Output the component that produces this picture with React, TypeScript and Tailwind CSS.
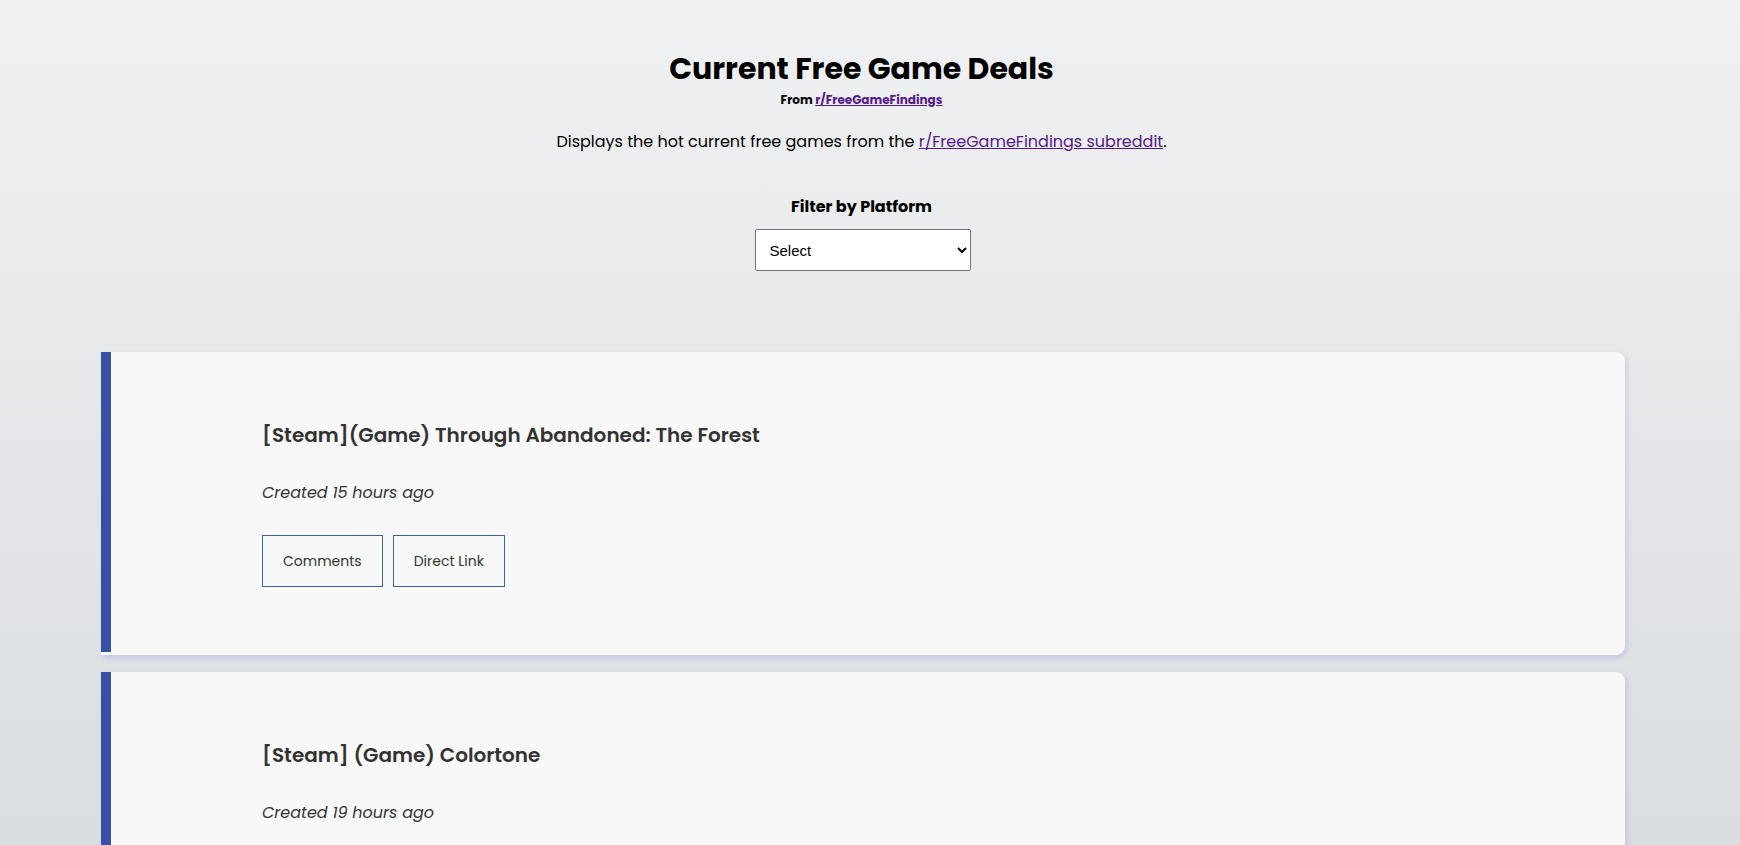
import React from "react";

type Deal = {
  id: string;
  title: string;
  created: string;
};

const deals: Deal[] = [
  { id: "a", title: "[Steam](Game) Through Abandoned: The Forest", created: "Created 15 hours ago" },
  { id: "b", title: "[Steam] (Game) Colortone", created: "Created 19 hours ago" },
];

const DealCard: React.FC<{ deal: Deal }> = ({ deal }) => {
  return (
    <div className="flex bg-[#f8f8f8] rounded-r-[9px] shadow-[2px_3px_5px_rgba(150,156,210,0.35)]">
      {/* 左の青いライン */}
      <div className="w-[10px] shrink-0 bg-[#3750a3] mb-[3px]" />
      <div className="flex flex-col pl-[151px] pt-[69px] pb-[68px] text-[#333]">
        <h2 className="text-[20px] leading-[28px] font-semibold">{deal.title}</h2>
        <p className="mt-[32px] text-[16px] leading-[24px] italic">{deal.created}</p>
        <div className="mt-[30px] flex gap-[10px]">
          <a href="#" className="h-[52px] px-[20px] flex items-center border border-[#3d6591] text-[14px]">
            Comments
          </a>
          <a href="#" className="h-[52px] px-[20px] flex items-center border border-[#3d6591] text-[14px]">
            Direct Link
          </a>
        </div>
      </div>
    </div>
  );
};

export default function App() {
  return (
    <div className="min-h-screen bg-fixed bg-gradient-to-b from-[#f0f1f2] to-[#dadde1] font-['Poppins','Inter',sans-serif] text-black">
      <div className="w-[1723px] pb-[40px]">
        {/* ヘッダー */}
        <header className="flex flex-col items-center pt-[51px] text-center">
          <h1 className="text-[30px] leading-[36px] font-bold">Current Free Game Deals</h1>
          <p className="mt-[5px] text-[12px] leading-[16px] font-bold">
            From{" "}
            <a href="#" className="text-[#551a8b] underline">
              r/FreeGameFindings
            </a>
          </p>
          <p className="mt-[22px] text-[16px] leading-[24px]">
            Displays the hot current free games from the{" "}
            <a href="#" className="text-[#551a8b] underline">
              r/FreeGameFindings subreddit
            </a>
            .
          </p>
          <label className="mt-[41px] text-[16px] leading-[24px] font-bold">Filter by Platform</label>
          <select className="mt-[10px] ml-[2px] w-[216px] h-[42px] pl-[10px] pr-[6px] bg-white border border-[#767676] rounded-[2px] text-[15px] font-['Liberation_Sans',Arial,sans-serif]">
            <option>Select</option>
            <option>Steam</option>
            <option>Epic Games</option>
            <option>GOG</option>
          </select>
        </header>

        {/* カード一覧 */}
        <div className="mt-[81px] ml-[101px] w-[1524px] flex flex-col gap-[17px]">
          {deals.map((d) => (
            <DealCard key={d.id} deal={d} />
          ))}
        </div>
      </div>
    </div>
  );
}
